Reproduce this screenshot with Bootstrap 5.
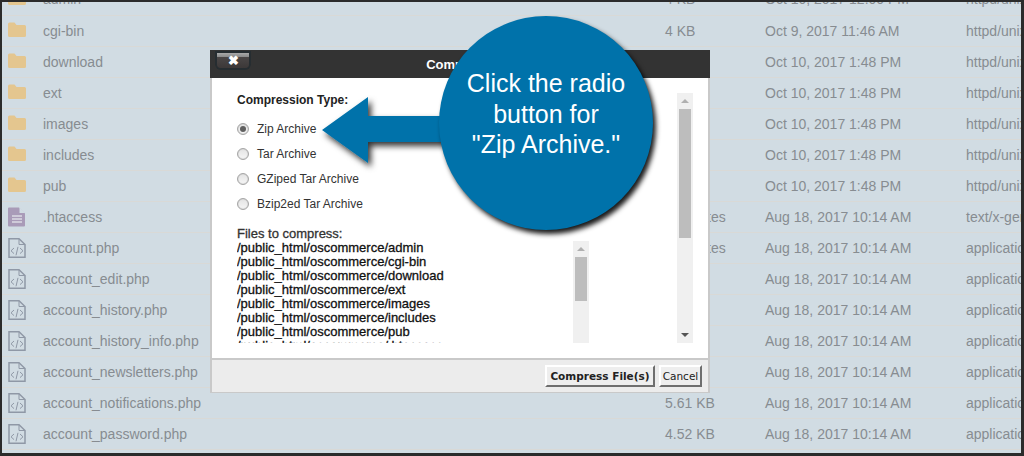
<!DOCTYPE html>
<html lang="en"><head><meta charset="utf-8"><title>Compress</title>
<link rel="stylesheet" href="https://cdn.jsdelivr.net/npm/bootstrap@5.3.0/dist/css/bootstrap.min.css">
<style>
html,body{height:456px;overflow:hidden;margin:0}
body{font-family:"Liberation Sans",Arial,sans-serif;background:#d1dce3}
.frame{height:456px;overflow:hidden;border:solid #2b2b2b;border-width:2px 3px 3px 2px;position:relative}
.flist{margin:-18px 0 0;width:1400px;table-layout:fixed;border-collapse:collapse;color:#878c91;font-size:14px}
.flist td{height:31px;padding:0;border-bottom:1px solid #d9d9d6;vertical-align:middle;white-space:nowrap;background:#d1dce3;line-height:16px}
.c-ic{width:41px;padding-left:6px!important}
.c-nm{width:622px}.c-sz{width:100px}.c-dt{width:201px}
.ic{display:block}
.ic-f{margin-top:-2px}
.dlg{position:absolute;left:208px;top:48px;width:500px;height:343px;background:#c9c9c9;padding:0 2px 1px;color:#222}
.dlg-h{background:#333;height:28px;margin-left:-2px;width:500px;color:#fff;font-weight:700;font-size:13px;text-align:center;position:relative;line-height:29px;padding-right:4px}
.xbtn{position:absolute;left:7px;top:3px;width:32px;height:15px;border-radius:0 0 4px 4px;background:linear-gradient(#a9a9a9 0,#8b8b8b 25%,#4a4646 30%,#3c3838 100%);box-shadow:0 0 0 2px #262d31;color:#fff;font-size:13px;line-height:15px;text-align:center}
.dlg-b{background:#fff;height:280px;position:relative;overflow:hidden}
.dlg-in{padding:15px 0 0 25px;font-size:12px}
.lbl{color:#222;line-height:14px;font-size:12px;font-weight:700}
.rad-list{margin-top:9px}
.rad{height:25px;gap:8px;color:#333;font-size:12px}
.rdo{width:12px;height:12px;border-radius:50%;border:1px solid #a6a6a6;background:linear-gradient(#e4e4e4,#f6f6f6);box-shadow:inset 0 0 1px #999}
.rdo i{width:6px;height:6px;border-radius:50%;background:#5f5f5f;display:block}
.fwrap{height:116px;overflow:hidden;width:336px;margin-top:11px;line-height:14px;color:#111;font-size:13px;-webkit-text-stroke:.3px #111}
.fwrap .lbl{font-size:13px;font-weight:400;color:#333;-webkit-text-stroke:.3px #333}
.sb{position:absolute;width:16px;background:#f0f0f0}
.sb u{position:absolute;left:2px;right:2px;background:#bdbdbd;display:block}
.sb-o{left:465px;top:15px;height:250px}
.sb-o u{top:16px;height:129px}
.sb-i{left:361px;top:163px;height:102px}
.sb-i u{top:16px;height:44px}
.tri-u,.tri-d{position:absolute;left:4px;width:0;height:0;border-left:4px solid transparent;border-right:4px solid transparent}
.tri-u{top:6px;border-bottom:4px solid #b0b0b0}
.tri-d{bottom:6px;border-top:4px solid #555}
.dlg-f{background:#ececec;height:34px;border-top:2px solid #c9c9c9;gap:4px;padding-right:6px}
.wbtn{background:#eee;border:2px solid;border-color:#fff #6e6e6e #6e6e6e #fff;font-family:"DejaVu Sans",sans-serif;font-size:10.5px;line-height:16px;color:#222;height:22px;padding:0;border-radius:0;white-space:nowrap}
.wbtn.s{font-weight:700;width:110px}
.wbtn.c{width:43px}
.bubble{position:absolute;left:437px;top:14px;width:214px;height:214px;border-radius:50%;background:#0072aa;box-shadow:3px 4px 5px rgba(0,0,0,.9);color:#fff;font-size:25px;line-height:30.5px;text-align:center;padding-top:52px}
.arrow{position:absolute;left:316px;top:88px;overflow:visible}
</style></head><body>
<div class="frame">
<table class="flist"><tbody id="rows"></tbody></table>
<div class="dlg">
 <div class="dlg-h"><span class="xbtn">✖</span>Compress</div>
 <div class="dlg-b"><div class="dlg-in">
   <div class="lbl">Compression Type:</div>
   <div class="rad-list">
    <div class="rad d-flex align-items-center"><span class="rdo d-flex align-items-center justify-content-center"><i></i></span>Zip Archive</div>
    <div class="rad d-flex align-items-center"><span class="rdo"></span>Tar Archive</div>
    <div class="rad d-flex align-items-center"><span class="rdo"></span>GZiped Tar Archive</div>
    <div class="rad d-flex align-items-center"><span class="rdo"></span>Bzip2ed Tar Archive</div>
   </div>
   <div class="fwrap"><div class="lbl">Files to compress:</div>/public_html/oscommerce/admin<br>/public_html/oscommerce/cgi-bin<br>/public_html/oscommerce/download<br>/public_html/oscommerce/ext<br>/public_html/oscommerce/images<br>/public_html/oscommerce/includes<br>/public_html/oscommerce/pub<br>/public_html/oscommerce/.htaccess</div>
  </div>
  <div class="sb sb-o"><span class="tri-u"></span><u></u><span class="tri-d"></span></div>
  <div class="sb sb-i"><span class="tri-u"></span><u></u></div>
 </div>
 <div class="dlg-f d-flex justify-content-end align-items-center"><button class="wbtn s">Compress File(s)</button><button class="wbtn c">Cancel</button></div>
</div>
<svg class="arrow" width="140" height="90" viewBox="0 0 140 90"><defs><filter id="sh" x="-20%" y="-20%" width="140%" height="140%"><feDropShadow dx="3" dy="4" stdDeviation="3" flood-color="#000" flood-opacity=".8"/></filter></defs><polygon points="4,40 50,7 50,26 140,26 140,52 50,52 50,73" fill="#0072aa" filter="url(#sh)"/></svg>
<div class="bubble">Click the radio<br>button for<br>"Zip Archive."</div>
</div>
<script>
var F='<svg class="ic ic-f" width="18" height="16" viewBox="0 0 18 16"><path d="M0 2a1.500 1.500 0 0 1 1.500-1.500h5l2 2.500h8a1.500 1.500 0 0 1 1.500 1.500v9a1.500 1.500 0 0 1-1.500 1.500h-15a1.500 1.500 0 0 1-1.500-1.500z" fill="#e4c68f"/></svg>';
var D='<svg class="ic" width="18" height="20" viewBox="0 0 18 20"><path d="M0 1.500a1 1 0 0 1 1-1h10l6 6v12a1 1 0 0 1-1 1h-15a1 1 0 0 1-1-1z" fill="#a99bb8"/><path d="M11.500 .5l5.500 5.500h-5.500z" fill="#d1dce3"/><path d="M4 9h10M4 12h10M4 15h10" stroke="#dcdce4" stroke-width="1.500"/></svg>';
var P='<svg class="ic" width="18" height="20" viewBox="0 0 18 20" fill="none" stroke="#8f98a6"><path d="M1 .8h10l6 5.700v12.700h-16z" stroke-width="1.500"/><path d="M11 1v5.500h6" stroke-width="1"/><path d="M6 10l-3 2.800 3 2.800M12 10l3 2.800-3 2.800M10 8.800l-2 8.500" stroke-width="1"/></svg>';
var d1='Oct 10, 2017 1:48 PM',d2='Aug 18, 2017 10:14 AM',u='httpd/unix-directory',a='application/x-httpd-php';
var R=[[F,'admin','4 KB','Oct 10, 2017 12:00 PM',u],[F,'cgi-bin','4 KB','Oct 9, 2017 11:46 AM',u],[F,'download','4 KB',d1,u],[F,'ext','4 KB',d1,u],[F,'images','4 KB',d1,u],[F,'includes','4 KB',d1,u],[F,'pub','4 KB',d1,u],[D,'.htaccess','512 bytes',d2,'text/x-generic'],[P,'account.php','918 bytes',d2,a],[P,'account_edit.php','7.1 KB',d2,a],[P,'account_history.php','5.3 KB',d2,a],[P,'account_history_info.php','8.2 KB',d2,a],[P,'account_newsletters.php','3.3 KB',d2,a],[P,'account_notifications.php','5.61 KB',d2,a],[P,'account_password.php','4.52 KB',d2,a]];
document.getElementById('rows').innerHTML=R.map(function(r){return '<tr><td class="c-ic">'+r[0]+'</td><td class="c-nm">'+r[1]+'</td><td class="c-sz">'+r[2]+'</td><td class="c-dt">'+r[3]+'</td><td>'+r[4]+'</td></tr>'}).join('');
</script>
<script src="https://cdn.jsdelivr.net/npm/bootstrap@5.3.0/dist/js/bootstrap.bundle.min.js"></script>
</body></html>
